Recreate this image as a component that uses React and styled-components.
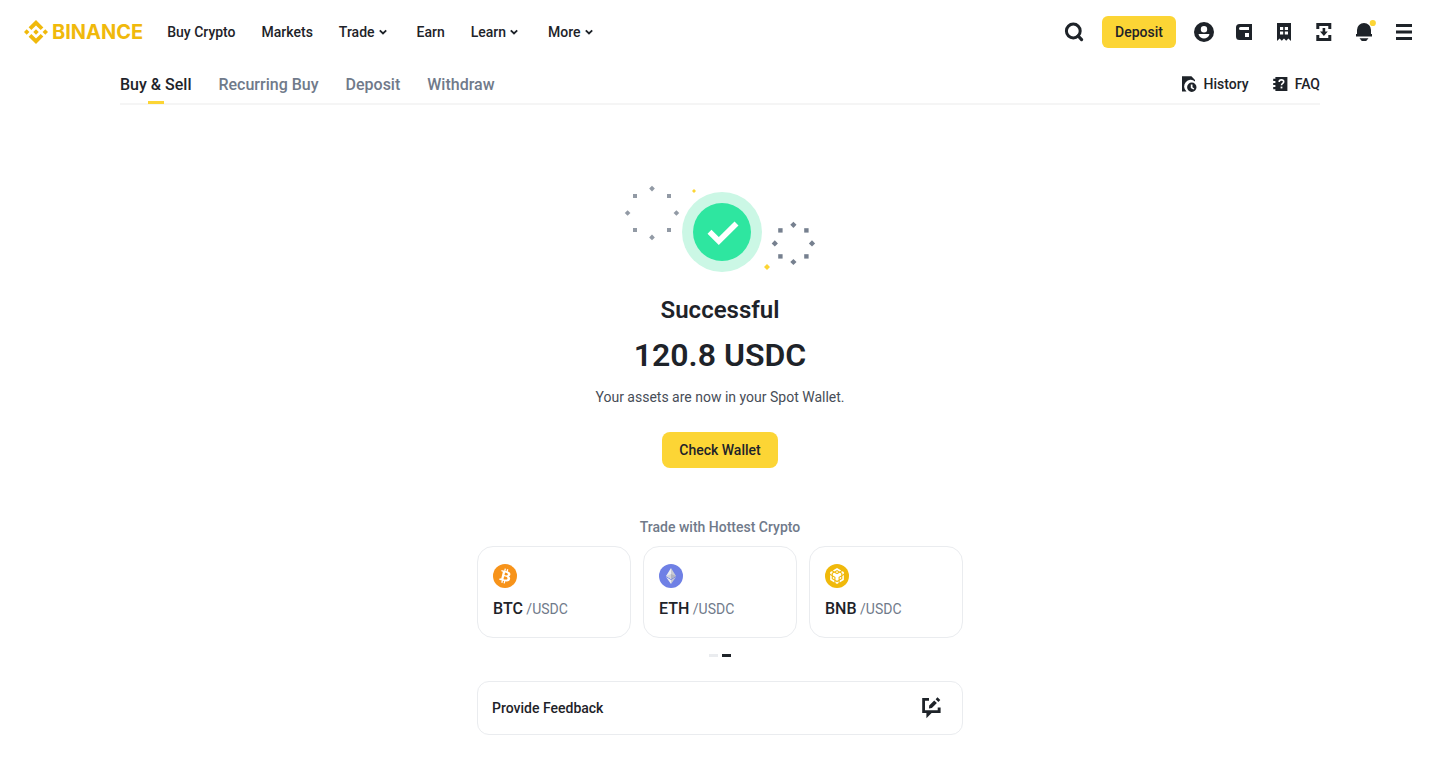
import React, { useState } from 'react';
import styled, { createGlobalStyle } from 'styled-components';

const GlobalStyle = createGlobalStyle`
  * {
    box-sizing: border-box;
  }

  body {
    margin: 0;
    background: #fff;
    color: #1e2329;
    font-family: Roboto, "Noto Sans", sans-serif;
    font-size: 14px;
    line-height: 20px;
  }

  a {
    color: inherit;
    text-decoration: none;
  }

  button {
    padding: 0;
    border: none;
    background: none;
    color: inherit;
    font: inherit;
    cursor: pointer;
  }

  h1, p, ul {
    margin: 0;
    padding: 0;
  }

  svg {
    display: block;
    flex-shrink: 0;
  }
`

const Header = styled.header`
  display: flex;
  align-items: center;
  justify-content: space-between;
  height: 64px;
  padding: 0 24px;
`

const HeaderGroup = styled.div`
  display: flex;
  align-items: center;
  gap: ${props => props.$gap}px;
`

const Logo = styled.a`
  display: flex;
  align-items: center;
  gap: 4px;
  color: #f0b90b;
  font-family: Inter, sans-serif;
  font-weight: 700;
  font-size: 20px;
  line-height: 24px;
`

const Nav = styled.nav`
  display: flex;
  gap: 26px;
  font-weight: 500;
`

const MenuButton = styled.button`
  display: flex;
  align-items: center;
  font-weight: 500;
`

const IconButton = styled.button`
  width: 24px;
  height: 24px;
`

const YellowButton = styled.button`
  height: ${props => props.$large ? "36px" : "32px"};
  padding: 0 ${props => props.$large ? "17px" : "13px"};
  border-radius: ${props => props.$large ? "8px" : "6px"};
  background: #fcd535;
  font-weight: 500;
`

const SubHeader = styled.div`
  display: flex;
  justify-content: space-between;
  max-width: 1200px;
  height: 41px;
  margin: 0 auto;
  border-bottom: 2px solid #f5f5f5;
`

const Tabs = styled.nav`
  display: flex;
  gap: 27px;
`

const Tab = styled.a`
  display: flex;
  flex-direction: column;
  align-items: center;
  justify-content: space-between;
  padding-top: 9px;
  color: ${props => props.$active ? "#1e2329" : "#707a8a"};
  font-weight: 500;
  font-size: 16px;
  line-height: 24px;

  &::after {
    content: "";
    width: 16px;
    height: 3px;
    margin-bottom: -1px;
    background: ${props => props.$active ? "#fcd535" : "transparent"};
  }
`

const HelpLinks = styled.div`
  display: flex;
  gap: 24px;
  font-weight: 500;

  a {
    display: flex;
    align-items: center;
    gap: 6px;
  }
`

const Result = styled.main`
  display: flex;
  flex-direction: column;
  align-items: center;
  max-width: 486px;
  margin: 0 auto;
  padding: 77px 0 32px;
`

const Title = styled.h1`
  margin-top: 18px;
  font-weight: 600;
  font-size: 24px;
  line-height: 32px;
`

const Amount = styled.p`
  margin-top: 7px;
  font-weight: 600;
  font-size: 32px;
  line-height: 44px;
`

const Note = styled.p`
  margin: 10px 0 25px;
  color: #474d57;
`

const SectionTitle = styled.p`
  margin: 49px 0 9px;
  color: #707a8a;
  font-weight: 500;
`

const PairList = styled.ul`
  display: grid;
  grid-template-columns: repeat(3, 1fr);
  gap: 12px;
  width: 100%;
  list-style: none;
`

const PairCard = styled.a`
  display: flex;
  flex-direction: column;
  gap: 9px;
  height: 92px;
  padding: 17px 15px;
  border: 1px solid #eaecef;
  border-radius: 16px;

  b {
    font-weight: 500;
    font-size: 16px;
    line-height: 24px;
  }

  span {
    color: #707a8a;
  }
`

const Pager = styled.div`
  display: flex;
  gap: 4px;
  margin: 16px 0 24px;
`

const PagerDot = styled.button`
  width: 9px;
  height: 3px;
  background: ${props => props.$active ? "#1e2329" : "#eaecef"};
`

const Feedback = styled.button`
  display: flex;
  align-items: center;
  justify-content: space-between;
  width: 100%;
  height: 54px;
  padding: 0 19px 0 14px;
  border: 1px solid #eaecef;
  border-radius: 12px;
  font-weight: 500;
`

const Icon = ({ size = 24, children }) => (
  <svg width={size} height={size} viewBox={`0 0 ${size} ${size}`} fill="currentColor" aria-hidden="true">
    {children}
  </svg>
)

const BinanceMark = () => (
  <svg width="24" height="24" viewBox="0 0 126.61 126.61" fill="#f0b90b" aria-hidden="true">
    <path d="m38.73 53.2 24.59-24.58 24.6 24.6 14.3-14.31L63.32 0l-38.9 38.9z" />
    <path d="m0 63.31 14.3-14.31 14.31 14.31-14.31 14.3z" />
    <path d="m38.73 73.41 24.59 24.59 24.6-24.6 14.31 14.29-38.9 38.91-38.91-38.88z" />
    <path d="m98 63.31 14.3-14.31 14.31 14.3-14.31 14.32z" />
    <path d="m77.83 63.3-14.51-14.52-14.51 14.5 14.51 14.5z" />
  </svg>
)

const Chevron = () => (
  <svg width="16" height="16" viewBox="0 0 16 16" fill="none" aria-hidden="true">
    <path d="M4.8 6.3 8 9.5l3.2-3.2" stroke="currentColor" strokeWidth="1.8" />
  </svg>
)

const SearchIcon = () => (
  <Icon>
    <circle cx="11.3" cy="11" r="6.9" fill="none" stroke="currentColor" strokeWidth="3" />
    <path d="m16.2 16 3.4 3.6" stroke="currentColor" strokeWidth="3.2" strokeLinecap="round" />
  </Icon>
)

const AccountIcon = () => (
  <Icon>
    <path fillRule="evenodd" d="M12 2a10 10 0 100 20 10 10 0 000-20zm0 4a3.2 3.2 0 110 6.4A3.2 3.2 0 0112 6zm-4.8 8h9.6c.5 0 .7.4.5.9A6 6 0 0112 18.4a6 6 0 01-5.3-3.5c-.2-.5 0-.9.5-.9z" />
  </Icon>
)

const WalletIcon = () => (
  <Icon>
    <path fillRule="evenodd" d="M7.5 4H20v16H7.5A3.5 3.5 0 014 16.5v-9A3.5 3.5 0 017.5 4zm1 3a1.5 1.5 0 000 3H17V7zM13 13v4h4v-4z" />
  </Icon>
)

const OrdersIcon = () => (
  <Icon>
    <path fillRule="evenodd" d="M5 3h14v18l-2.6-2.4-2.2 2.2-2.2-2.2-2.2 2.2-2.2-2.2L5 21zm3 4v3h3.2V7zm4.8 0v3H16V7zM8 11.6v3h3.2v-3zm4.8 0v3H16v-3z" />
  </Icon>
)

const DownloadIcon = () => (
  <Icon>
    <path d="M4.3 3h15v6h-3V6h-9v3h-3zM4.3 15h3v3h9v-3h3v6h-15zM10.6 8h2.6v3.6h2.6L11.9 16 8 11.6h2.6z" />
  </Icon>
)

const BellIcon = () => (
  <svg width="24" height="24" viewBox="0 0 24 24" fill="currentColor" overflow="visible" aria-hidden="true">
    <path d="M12 3a7 7 0 017 7v4h1v2.4H4V14h1v-4a7 7 0 017-7zM7.5 18.2h9L14.2 21H9.8z" />
    <circle cx="20.8" cy="3" r="3.1" fill="#fcd535" />
  </svg>
)

const MenuIcon = () => (
  <Icon>
    <path d="M4 4h16v3H4zM4 10.5h16v3H4zM4 17h16v3H4z" />
  </Icon>
)

const HistoryIcon = () => (
  <Icon size={16}>
    <path d="M0 .3h9.4L13 3.9V5.4A6.4 6.4 0 004.5 15.5H0z" />
    <path fillRule="evenodd" d="M9.8 6.6a4.7 4.7 0 110 9.4 4.7 4.7 0 010-9.4zM8.8 8.6v3.3l2.6 1.7.9-1.2-1.8-1.2V8.6z" />
  </Icon>
)

const FaqIcon = () => (
  <Icon size={16}>
    <path d="M2.4 1h12v14h-12v-1.8H.2v-2.1h2.2V9H.2V7h2.2V4.9H.2V2.8h2.2z" />
    <path d="M6.2 5.9c0-1.2.9-2 2.2-2s2.3.8 2.3 1.9c0 1.6-2.2 1.6-2.2 3.4" fill="none" stroke="#fff" strokeWidth="1.6" />
    <path d="M7.6 10.6h1.8v1.8H7.6z" fill="#fff" />
  </Icon>
)

const FeedbackIcon = () => (
  <Icon>
    <path d="M3.2 2H10v2.8H6v9.4h12.7v-2.6h2.9V17h-9l-5.2 5.3V17H3.2z" />
    <path d="m10 12.4.2-3 5-5 2.7 2.7-5 5zM16.6 3.2l1.9-1.9 2.8 2.8-1.9 1.9z" />
  </Icon>
)

const BtcIcon = () => (
  <svg width="24" height="24" viewBox="0 0 32 32" aria-hidden="true">
    <circle cx="16" cy="16" r="16" fill="#f7931a" />
    <path fill="#fff" d="M23.189 14.02c.314-2.096-1.283-3.223-3.465-3.975l.708-2.84-1.728-.43-.69 2.765c-.454-.114-.92-.22-1.385-.326l.695-2.783L15.596 6l-.708 2.839c-.376-.086-.746-.17-1.104-.26l.002-.009-2.384-.595-.46 1.846s1.283.294 1.256.312c.7.175.826.638.805 1.006l-.806 3.235c.048.012.11.03.18.057l-.183-.045-1.13 4.532c-.086.212-.303.531-.793.41.018.025-1.256-.313-1.256-.313l-.858 1.978 2.25.561c.418.105.828.215 1.231.318l-.715 2.872 1.727.43.708-2.84c.472.127.93.245 1.378.357l-.706 2.828 1.728.43.715-2.866c2.948.558 5.164.333 6.097-2.333.752-2.146-.037-3.385-1.588-4.192 1.13-.26 1.98-1.003 2.207-2.538zm-3.95 5.538c-.533 2.147-4.148.986-5.32.695l.95-3.805c1.172.293 4.929.872 4.37 3.11zm.535-5.569c-.487 1.953-3.495.96-4.47.717l.86-3.45c.975.243 4.118.696 3.61 2.733z" />
  </svg>
)

const EthIcon = () => (
  <svg width="24" height="24" viewBox="0 0 32 32" aria-hidden="true">
    <circle cx="16" cy="16" r="16" fill="#6f80e5" />
    <g transform="translate(1.5 1.9) scale(.88)">
      <path fill="#c9cbd3" d="M16.5 4v16.6L24 16.2zM16.5 22v6L24 17.6z" />
      <path fill="#eceef2" d="M16.5 4 9 16.2l7.5 4.4zM16.5 28v-6L9 17.6z" />
      <path fill="#b0b3c0" d="m16.5 12.9 7.5 3.3-7.5 4.4z" />
      <path fill="#d3d5dc" d="M16.5 12.9 9 16.2l7.5 4.4z" />
    </g>
  </svg>
)

const BnbIcon = () => (
  <svg width="24" height="24" viewBox="0 0 24 24" aria-hidden="true">
    <circle cx="12" cy="12" r="12" fill="#f0b90b" />
    <path
      fill="#fff"
      transform="translate(4.1 4.1) scale(.66)"
      d="M5.631 3.676 12.001 0l6.367 3.676-2.34 1.358L12 2.716 7.972 5.034l-2.34-1.358Zm12.737 4.636-2.34-1.358L12 9.272 7.972 6.954l-2.34 1.358v2.716l4.026 2.318v4.636L12 19.341l2.341-1.359v-4.636l4.027-2.318V8.312Zm0 7.352v-2.716l-2.34 1.358v2.716l2.34-1.358Zm1.663.96-4.027 2.318v2.717l6.368-3.677V10.63l-2.34 1.358v4.636Zm-2.34-10.63 2.34 1.358v2.716l2.341-1.358V5.994l-2.34-1.358-2.342 1.358ZM9.657 19.926v2.716L12 24l2.341-1.358v-2.716l-2.34 1.358-2.342-1.358Zm-4.027-4.262 2.34 1.358v-2.716l-2.34-1.358v2.716Zm4.027-9.67L12 7.352l2.341-1.358L12 4.636 9.659 5.994Zm-5.69 1.358 2.34-1.358-2.34-1.358-2.341 1.358V8.71l2.34 1.358V7.352Zm0 4.636L1.627 10.63v7.353l6.368 3.676v-2.716l-4.027-2.319v-4.636Z"
    />
  </svg>
)

// ring of eight sparks: diamonds on the axes, squares on the diagonals
const Sparks = ({ cx, cy, r, size, color }) => {
  const d = Math.round(r * 0.7);
  const diagonals = [[-d, -d], [d, -d], [-d, d], [d, d]];
  const axes = [[0, -r], [r, 0], [0, r], [-r, 0]];
  return (
    <g fill={color}>
      {diagonals.map(([x, y]) => (
        <rect key={`${x}${y}`} x={cx + x - size / 2} y={cy + y - size / 2} width={size} height={size} />
      ))}
      {axes.map(([x, y]) => (
        <Diamond key={`${x}${y}`} cx={cx + x} cy={cy + y} size={size} />
      ))}
    </g>
  )
}

const Diamond = ({ cx, cy, size, color }) => (
  <rect x={cx - size / 2} y={cy - size / 2} width={size} height={size} fill={color} transform={`rotate(45 ${cx} ${cy})`} />
)

const SuccessArt = () => (
  <svg width="200" height="94" viewBox="0 0 200 94" role="img" aria-label="Success">
    <Sparks cx={32} cy={31} r={24.4} size={4} color="#929aa5" />
    <Sparks cx={173.4} cy={61.4} r={18.6} size={4.4} color="#76808f" />
    <Diamond cx={74} cy={9} size={2.8} color="#fcd535" />
    <Diamond cx={147} cy={85} size={4.2} color="#fcd535" />
    <circle cx="102" cy="50" r="40" fill="#cbf7e5" />
    <circle cx="102" cy="50" r="29" fill="#2ee6a0" />
    <path d="m89.5 49.8 9.3 9.3 17.7-17.7" fill="none" stroke="#fff" strokeWidth="5.6" />
  </svg>
)

const NAV_ITEMS = [
  { label: "Buy Crypto" },
  { label: "Markets" },
  { label: "Trade", menu: true },
  { label: "Earn" },
  { label: "Learn", menu: true },
  { label: "More", menu: true },
];

const TOOLS = [
  { label: "Account", Glyph: AccountIcon },
  { label: "Wallet", Glyph: WalletIcon },
  { label: "Orders", Glyph: OrdersIcon },
  { label: "Downloads", Glyph: DownloadIcon },
  { label: "Notifications", Glyph: BellIcon },
  { label: "Menu", Glyph: MenuIcon },
];

const TABS = ["Buy & Sell", "Recurring Buy", "Deposit", "Withdraw"];

const PAIRS = [
  { base: "BTC", quote: "USDC", Coin: BtcIcon },
  { base: "ETH", quote: "USDC", Coin: EthIcon },
  { base: "BNB", quote: "USDC", Coin: BnbIcon },
];

const App = () => {
  const [activeTab, setActiveTab] = useState(TABS[0]);
  const [page, setPage] = useState(1);

  return (
    <>
      <GlobalStyle />
      <Header>
        <HeaderGroup $gap={24}>
          <Logo href="#">
            <BinanceMark />
            BINANCE
          </Logo>
          <Nav>
            {NAV_ITEMS.map(item => item.menu ?
              <MenuButton key={item.label} aria-haspopup="true">
                {item.label}
                <Chevron />
              </MenuButton>
              :
              <a key={item.label} href="#">{item.label}</a>
            )}
          </Nav>
        </HeaderGroup>
        <HeaderGroup $gap={16}>
          <IconButton aria-label="Search"><SearchIcon /></IconButton>
          <YellowButton>Deposit</YellowButton>
          {TOOLS.map(({ label, Glyph }) => (
            <IconButton key={label} aria-label={label}><Glyph /></IconButton>
          ))}
        </HeaderGroup>
      </Header>
      <SubHeader>
        <Tabs>
          {TABS.map(tab => (
            <Tab key={tab} href="#" $active={tab === activeTab} onClick={() => setActiveTab(tab)}>{tab}</Tab>
          ))}
        </Tabs>
        <HelpLinks>
          <a href="#"><HistoryIcon />History</a>
          <a href="#"><FaqIcon />FAQ</a>
        </HelpLinks>
      </SubHeader>
      <Result>
        <SuccessArt />
        <Title>Successful</Title>
        <Amount>120.8 USDC</Amount>
        <Note>Your assets are now in your Spot Wallet.</Note>
        <YellowButton $large>Check Wallet</YellowButton>
        <SectionTitle>Trade with Hottest Crypto</SectionTitle>
        <PairList>
          {PAIRS.map(({ base, quote, Coin }) => (
            <li key={base}>
              <PairCard href="#">
                <Coin />
                <div><b>{base}</b> <span>/{quote}</span></div>
              </PairCard>
            </li>
          ))}
        </PairList>
        <Pager>
          {[0, 1].map(index => (
            <PagerDot key={index} aria-label={`Page ${index + 1}`} $active={index === page} onClick={() => setPage(index)} />
          ))}
        </Pager>
        <Feedback>
          Provide Feedback
          <FeedbackIcon />
        </Feedback>
      </Result>
    </>
  )
}

export default App;
